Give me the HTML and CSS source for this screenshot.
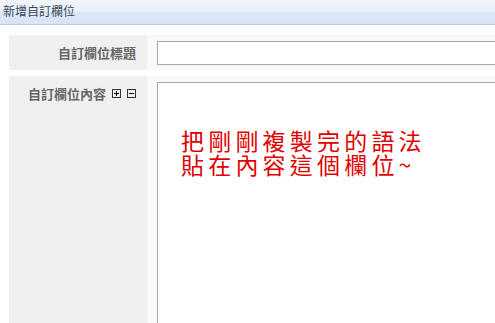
FILE: index.html
```html
<!DOCTYPE html>
<html lang="zh-Hant">
<head>
    <meta charset="UTF-8">
    <meta name="viewport" content="width=device-width, initial-scale=1.0">
    <title>新增自訂欄位</title>
    <!-- CSS for styling -->
    <link rel="stylesheet" href="styles.css">
</head>
<body>
    <!-- Title bar -->
    <div class="title-bar">新增自訂欄位</div>

    <!-- Form rows -->
    <div class="form">
      <div class="row">
        <div class="label">自訂欄位標題</div>
        <div class="field">
          <input type="text" class="text-input" name="title">
        </div>
      </div>

      <div class="row row-tall">
        <div class="label label-top">
          <span>自訂欄位內容</span>
          <span class="icon-box">
            <svg width="9" height="9" viewBox="0 0 9 9"><rect x="0.5" y="0.5" width="8" height="8" fill="#f3f1e6" stroke="#333"/><path d="M2 4.5h5M4.5 2v5" stroke="#000" stroke-width="1"/></svg>
          </span>
          <span class="icon-box">
            <svg width="9" height="9" viewBox="0 0 9 9"><rect x="0.5" y="0.5" width="8" height="8" fill="#f3f1e6" stroke="#333"/><path d="M2 4.5h5" stroke="#000" stroke-width="1"/></svg>
          </span>
        </div>
        <div class="field field-top">
          <div class="editor">
            <p class="note">把剛剛複製完的語法<br>貼在內容這個欄位~</p>
          </div>
        </div>
      </div>
    </div>
</body>
</html>
```

FILE: styles.css
```css
* {
  box-sizing: border-box;
  margin: 0;
  padding: 0;
}

body {
  font-family: "Noto Sans CJK TC", "Liberation Sans", sans-serif;
  background-color: white;
  overflow: hidden;
}

.title-bar {
  height: 25px;
  padding: 3px 0 0 3px;
  font-size: 12px;
  line-height: 16px;
  color: #3a4656;
  background: linear-gradient(to bottom, #f1f5fb 0, #eaf0f9 11px, #dce7f5 12px, #d8e4f4 24px);
  border-bottom: 1px solid #b7cae2;
}

.form {
  margin: 10px 0 0 9px;
  display: flex;
  flex-direction: column;
  gap: 6px;
}

.row {
  display: flex;
  height: 35px;
}

.row-tall {
  height: 247px;
}

.label {
  width: 138px;
  flex: none;
  display: flex;
  align-items: center;
  justify-content: flex-end;
  gap: 6px;
  padding-right: 11px;
  background-color: #f0f0f0;
  color: #666;
  font-size: 13px;
  font-weight: bold;
}

.label-top {
  align-items: flex-start;
  padding-top: 9px;
  line-height: 18px;
}

.icon-box {
  display: flex;
  margin-top: 4px;
}

.field {
  flex: 1;
  display: flex;
  align-items: center;
  padding-left: 10px;
  background-color: #f9f9f9;
}

.field-top {
  align-items: flex-start;
  padding-top: 6px;
}

/* box runs on past the right edge in the shot, so no right border */
.text-input {
  width: 100%;
  height: 24px;
  border: 1px solid #a8a8a8;
  border-right: none;
  background-color: white;
}

.editor {
  width: 100%;
  height: 241px;
  border: 1px solid #a8a8a8;
  border-right: none;
  border-bottom: none;
  background-color: white;
  padding: 45px 0 0 23px;
}

.note {
  color: #e00000;
  font-size: 23px;
  line-height: 24px;
  letter-spacing: 4.2px;
}
```
